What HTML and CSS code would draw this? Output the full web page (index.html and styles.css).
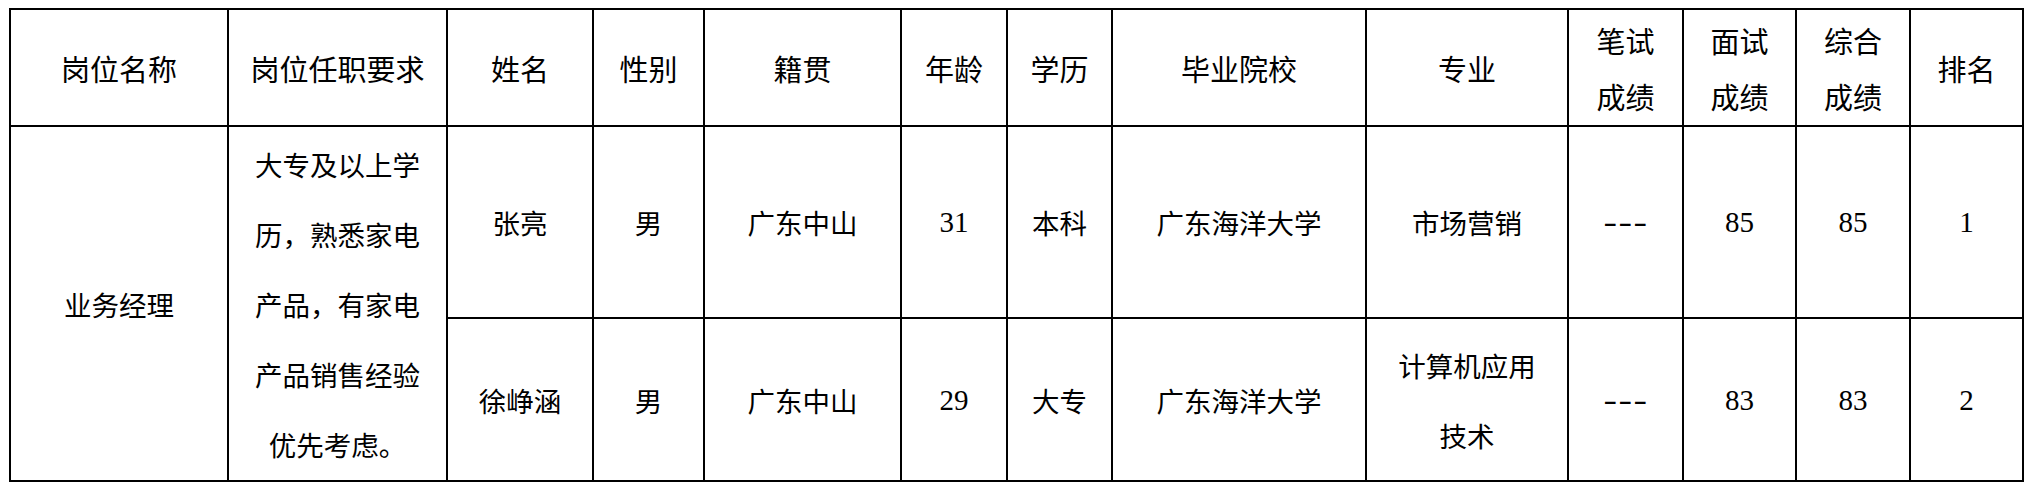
FILE: index.html
```html
<!DOCTYPE html>
<html lang="zh-CN">
<head>
<meta charset="utf-8">
<title>招聘成绩表</title>
<link rel="stylesheet" href="styles.css">
</head>
<body>
<table class="grid">
  <colgroup>
    <col class="c1"><col class="c2"><col class="c3"><col class="c4"><col class="c5"><col class="c6"><col class="c7"><col class="c8"><col class="c9"><col class="c10"><col class="c11"><col class="c12"><col class="c13">
  </colgroup>
  <thead>
    <tr class="head">
      <th>岗位名称</th>
      <th>岗位任职要求</th>
      <th>姓名</th>
      <th>性别</th>
      <th>籍贯</th>
      <th>年龄</th>
      <th>学历</th>
      <th>毕业院校</th>
      <th>专业</th>
      <th class="two">笔试<br>成绩</th>
      <th class="two">面试<br>成绩</th>
      <th class="two">综合<br>成绩</th>
      <th>排名</th>
    </tr>
  </thead>
  <tbody>
    <tr class="r1">
      <td rowspan="2">业务经理</td>
      <td rowspan="2" class="req"><div class="req-text">大专及以上学历，熟悉家电产品，有家电产品销售经验优先考虑。</div></td>
      <td>张亮</td>
      <td>男</td>
      <td>广东中山</td>
      <td class="num">31</td>
      <td>本科</td>
      <td>广东海洋大学</td>
      <td>市场营销</td>
      <td class="num dash"><span class="dash-text">---</span></td>
      <td class="num">85</td>
      <td class="num">85</td>
      <td class="num">1</td>
    </tr>
    <tr class="r2">
      <td>徐峥涵</td>
      <td>男</td>
      <td>广东中山</td>
      <td class="num">29</td>
      <td>大专</td>
      <td>广东海洋大学</td>
      <td class="wrap">计算机应用<br>技术</td>
      <td class="num dash"><span class="dash-text">---</span></td>
      <td class="num">83</td>
      <td class="num">83</td>
      <td class="num">2</td>
    </tr>
  </tbody>
</table>
</body>
</html>
```

FILE: styles.css
```css
html, body {
  margin: 0;
  padding: 0;
  background: #ffffff;
}

body {
  padding: 8px 0 0 9px;
  color: #000000;
  font-family: "Noto Sans CJK SC", sans-serif;
}

.grid {
  border-collapse: collapse;
  table-layout: fixed;
  width: 2015px;
}

.grid th,
.grid td {
  border: 2px solid #000000;
  padding: 0;
  text-align: center;
  vertical-align: middle;
}

.c1 { width: 218px; }
.c2 { width: 219px; }
.c3 { width: 146px; }
.c4 { width: 111px; }
.c5 { width: 197px; }
.c6 { width: 106px; }
.c7 { width: 105px; }
.c8 { width: 254px; }
.c9 { width: 202px; }
.c10 { width: 115px; }
.c11 { width: 113px; }
.c12 { width: 114px; }
.c13 { width: 113px; }

.head th {
  height: 115px;
  font-size: 29px;
  font-weight: 400;
  line-height: 56px;
}

.grid td {
  font-size: 27.5px;
  font-weight: 400;
  line-height: 70px;
}

.r1 td { height: 190px; }
.r2 td { height: 161px; }

.req-text {
  width: 6.2em;
  margin: 0 auto;
}

.grid td.num {
  font-family: "Liberation Serif", serif;
  font-size: 29px;
}

.dash-text {
  display: inline-block;
  letter-spacing: 1px;
  transform: scaleX(1.4);
}
```
